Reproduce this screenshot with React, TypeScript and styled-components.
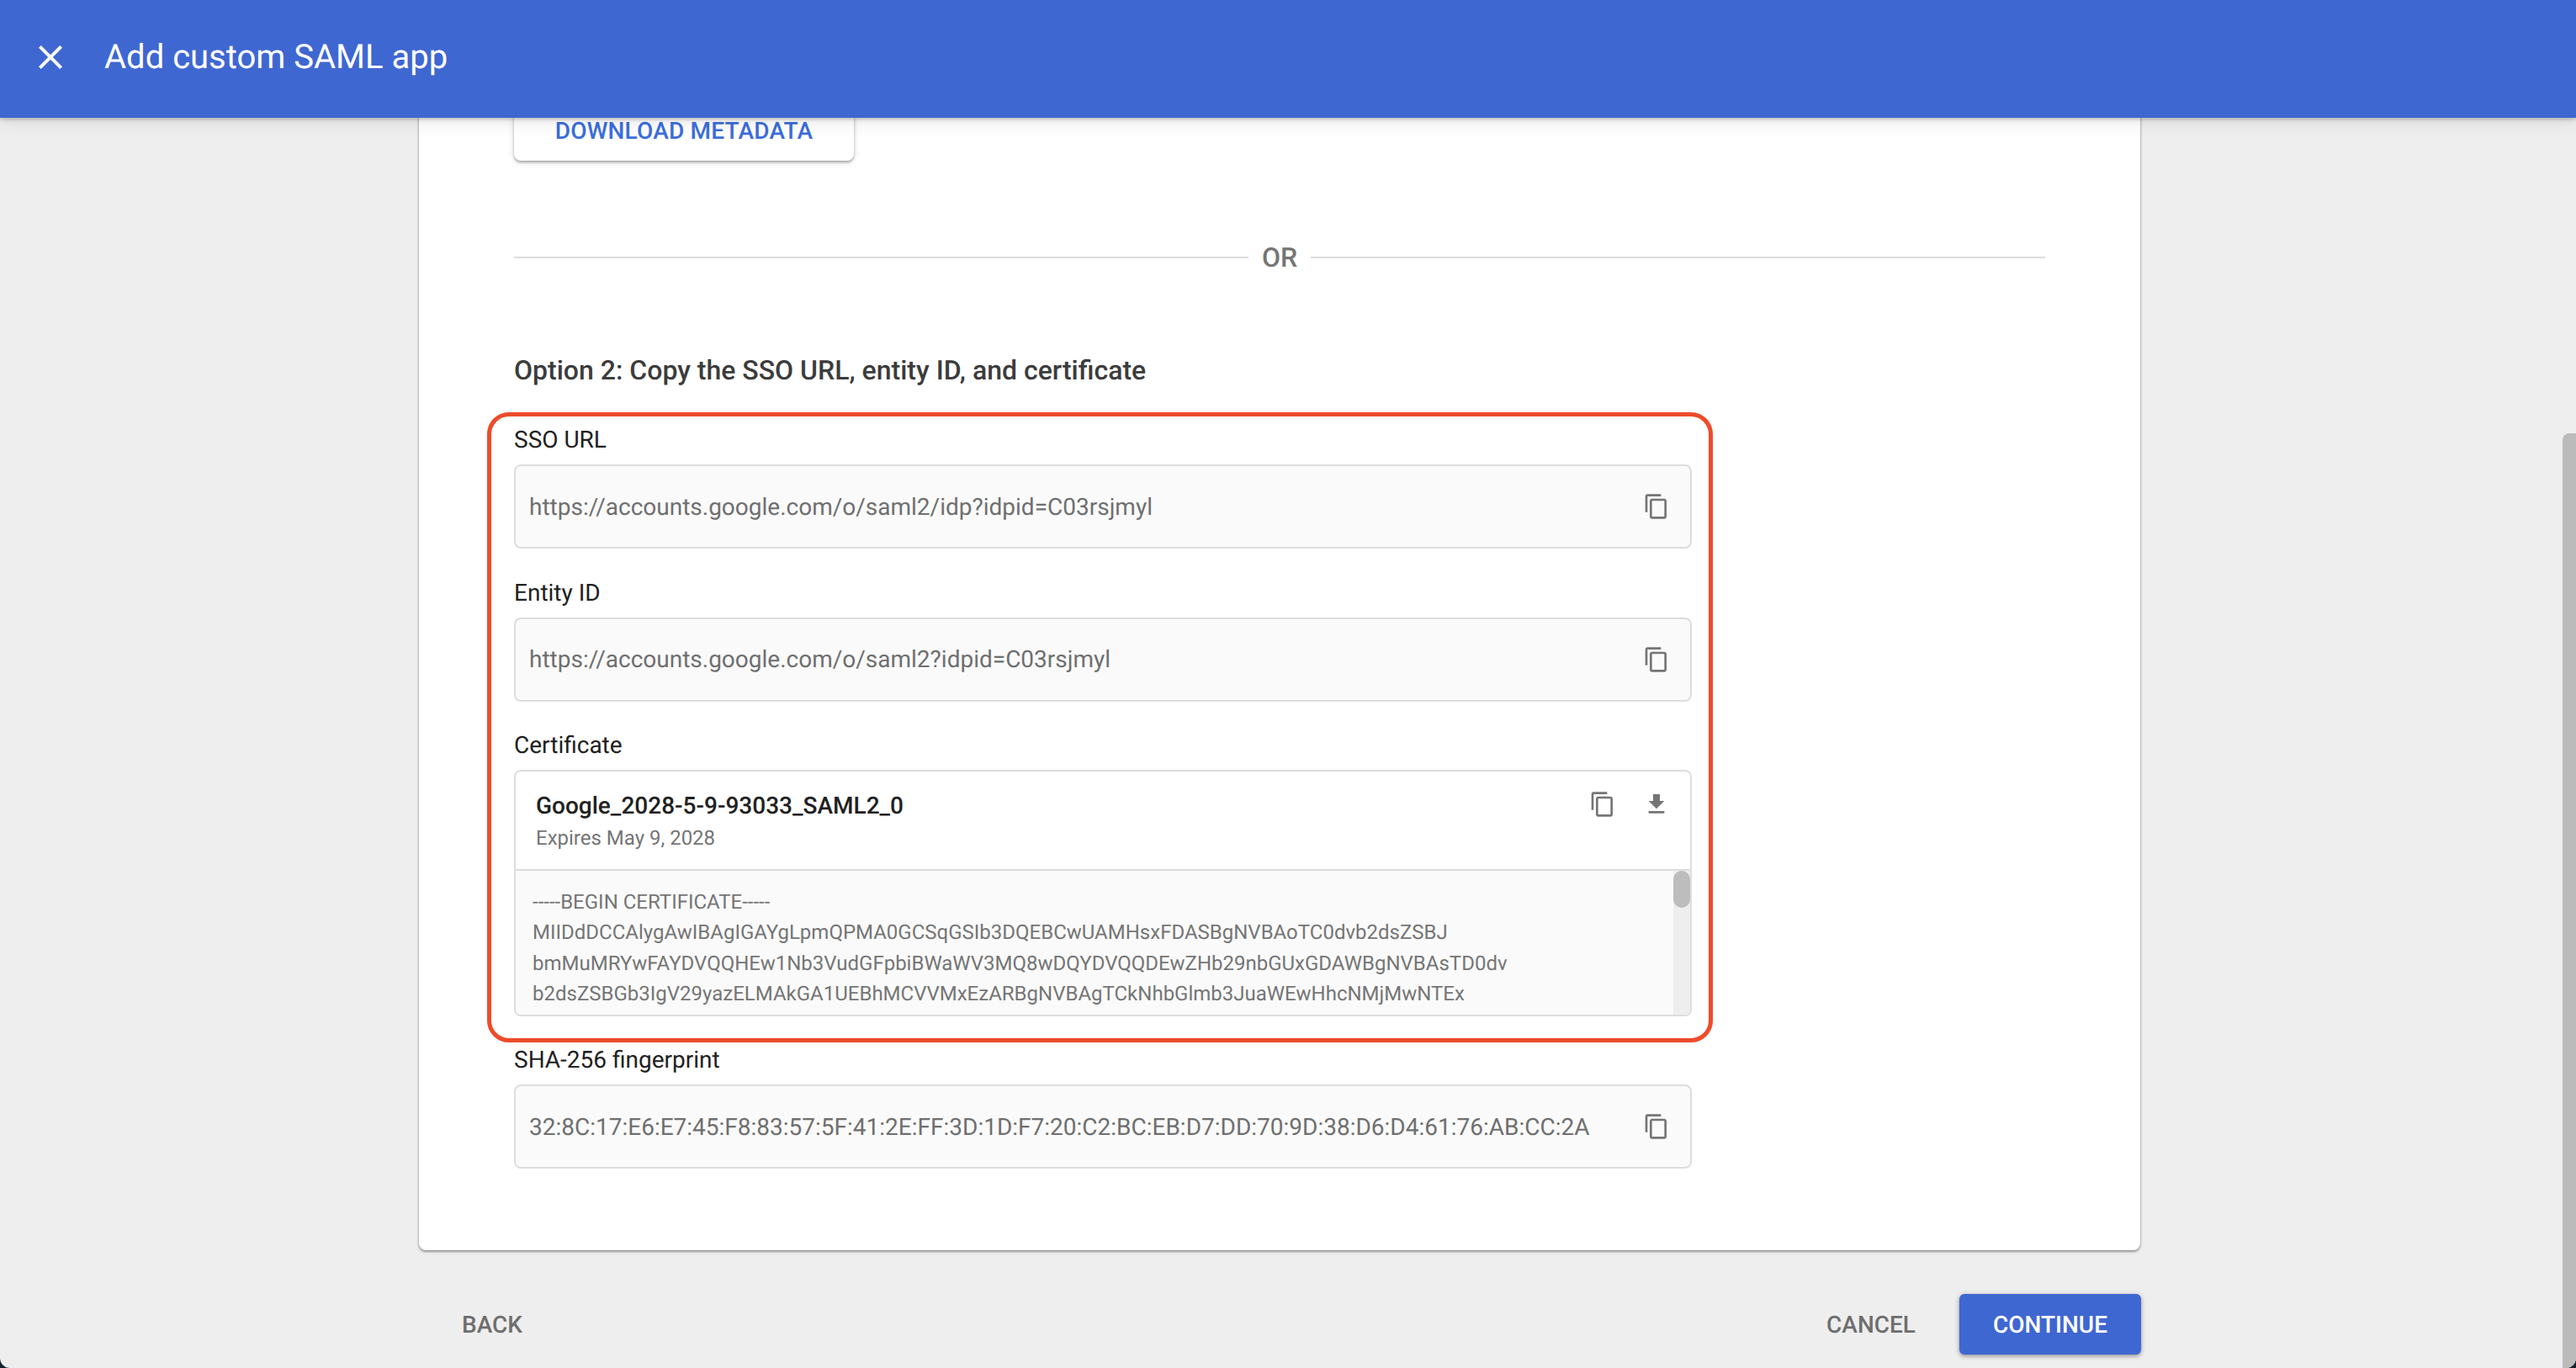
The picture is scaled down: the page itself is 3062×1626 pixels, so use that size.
import { MdClose, MdContentCopy, MdFileDownload } from "react-icons/md";
import styled, { createGlobalStyle } from "styled-components";

const GlobalStyle = createGlobalStyle`
  html, body {
    margin: 0;
    padding: 0;
    background: #14242c;
    font-family: Roboto, "Liberation Sans", sans-serif;
    text-rendering: geometricPrecision;
  }
`;

const CERT_LINES = [
  "-----BEGIN CERTIFICATE-----",
  "MIIDdDCCAlygAwIBAgIGAYgLpmQPMA0GCSqGSIb3DQEBCwUAMHsxFDASBgNVBAoTC0dvb2dsZSBJ",
  "bmMuMRYwFAYDVQQHEw1Nb3VudGFpbiBWaWV3MQ8wDQYDVQQDEwZHb29nbGUxGDAWBgNVBAsTD0dv",
  "b2dsZSBGb3IgV29yazELMAkGA1UEBhMCVVMxEzARBgNVBAgTCkNhbGlmb3JuaWEwHhcNMjMwNTEx",
];

function CopyField({ value }: { value: string }) {
  return (
    <Field>
      <FieldValue>{value}</FieldValue>
      <IconButton>
        <MdContentCopy />
      </IconButton>
    </Field>
  );
}

export default function App() {
  return (
    <Page>
      <GlobalStyle />
      <Header>
        <CloseButton>
          <MdClose />
        </CloseButton>
        <Title>Add custom SAML app</Title>
      </Header>
      <Body>
        <Main>
          <Card>
            <DownloadButton>Download metadata</DownloadButton>
            <OrRow>
              <OrLine />
              <OrText>OR</OrText>
              <OrLine />
            </OrRow>
            <Heading>Option 2: Copy the SSO URL, entity ID, and certificate</Heading>
            <Highlighted>
              <Highlight />
              <Label>SSO URL</Label>
              <CopyField value="https://accounts.google.com/o/saml2/idp?idpid=C03rsjmyl" />
              <Label $spaced>Entity ID</Label>
              <CopyField value="https://accounts.google.com/o/saml2?idpid=C03rsjmyl" />
              <Label $spaced>Certificate</Label>
              <CertBox>
                <CertHead>
                  <div>
                    <CertName>Google_2028-5-9-93033_SAML2_0</CertName>
                    <CertExpiry>Expires May 9, 2028</CertExpiry>
                  </div>
                  <CertActions>
                    <MdContentCopy />
                    <MdFileDownload />
                  </CertActions>
                </CertHead>
                <CertBody>
                  <CertText>
                    {CERT_LINES.map((line) => (
                      <div key={line}>{line}</div>
                    ))}
                  </CertText>
                  <CertScroll>
                    <CertThumb />
                  </CertScroll>
                </CertBody>
              </CertBox>
            </Highlighted>
            <Label $fingerprint>SHA-256 fingerprint</Label>
            <CopyField value="32:8C:17:E6:E7:45:F8:83:57:5F:41:2E:FF:3D:1D:F7:20:C2:BC:EB:D7:DD:70:9D:38:D6:D4:61:76:AB:CC:2A" />
          </Card>
          <Footer>
            <TextButton>Back</TextButton>
            <FooterRight>
              <TextButton>Cancel</TextButton>
              <ContinueButton>Continue</ContinueButton>
            </FooterRight>
          </Footer>
        </Main>
        <PageScroll>
          <PageThumb />
        </PageScroll>
      </Body>
    </Page>
  );
}

const Page = styled.div`
  width: 3062px;
  height: 1626px;
  overflow: hidden;
  display: flex;
  flex-direction: column;
  background: #eeeeee;
  border-radius: 0 0 12px 12px;
`;

const Header = styled.header`
  flex: none;
  height: 140px;
  box-sizing: border-box;
  padding: 0 0 4px 36px;
  display: flex;
  align-items: center;
  gap: 40px;
  background: #3f67d1;
  color: #ffffff;
  position: relative;
  z-index: 2;
  box-shadow: 0 2px 4px rgba(0, 0, 0, 0.22), 0 4px 20px rgba(0, 0, 0, 0.1);
`;

const CloseButton = styled.div`
  display: flex;
  font-size: 48px;
`;

const Title = styled.h1`
  margin: 0;
  font-size: 40px;
  font-weight: 400;
  line-height: 56px;
`;

const Body = styled.div`
  flex: 1;
  min-height: 0;
  display: flex;
`;

const Main = styled.main`
  flex: 1;
  min-width: 0;
  padding-left: 498px;
`;

const Card = styled.section`
  width: 2046px;
  box-sizing: border-box;
  margin-top: -40px;
  padding: 19px 113px 97px 113px;
  background: #ffffff;
  border-radius: 8px;
  box-shadow: 0 2px 3px rgba(0, 0, 0, 0.35), 0 0 3px rgba(0, 0, 0, 0.2);
`;

const DownloadButton = styled.div`
  width: 404px;
  height: 72px;
  display: flex;
  align-items: center;
  justify-content: center;
  border-radius: 8px;
  background: #ffffff;
  color: #3b6edb;
  font-size: 28px;
  font-weight: 500;
  letter-spacing: 0.2px;
  text-transform: uppercase;
  box-shadow: 0 2px 3px rgba(0, 0, 0, 0.3), 0 2px 8px rgba(0, 0, 0, 0.12);
`;

const OrRow = styled.div`
  margin-top: 95px;
  height: 40px;
  display: flex;
  align-items: center;
`;

const OrLine = styled.div`
  flex: 1;
  height: 2px;
  background: #dddddd;
`;

const OrText = styled.span`
  width: 74px;
  text-align: center;
  font-size: 32px;
  font-weight: 500;
  color: #757575;
`;

const Heading = styled.h2`
  margin: 94px 0 0;
  font-size: 32px;
  font-weight: 500;
  line-height: 40px;
  color: #3c3c3c;
`;

const Highlighted = styled.div`
  position: relative;
  width: 1400px;
  margin-top: 47px;
`;

const Highlight = styled.div`
  position: absolute;
  top: -17px;
  right: -25px;
  bottom: -31px;
  left: -32px;
  border: 5px solid #ee4b2b;
  border-radius: 26px;
  pointer-events: none;
`;

const Label = styled.div<{ $spaced?: boolean; $fingerprint?: boolean }>`
  height: 32px;
  margin-top: ${(p) => (p.$fingerprint ? "36px" : p.$spaced ? "36.5px" : "0")};
  margin-bottom: 13px;
  font-size: 28px;
  line-height: 32px;
  color: #212121;
`;

const Field = styled.div`
  width: 1400px;
  height: 100px;
  box-sizing: border-box;
  padding: 0 24px 0 16px;
  display: flex;
  align-items: center;
  justify-content: space-between;
  background: #fafafa;
  border: 2px solid #dddddd;
  border-radius: 8px;
`;

const FieldValue = styled.span`
  font-size: 28px;
  color: #6f6f6f;
`;

const IconButton = styled.div`
  display: flex;
  font-size: 32px;
  color: #757575;
`;

const CertBox = styled.div`
  width: 1400px;
  height: 293px;
  box-sizing: border-box;
  display: flex;
  flex-direction: column;
  overflow: hidden;
  background: #ffffff;
  border: 2px solid #dddddd;
  border-radius: 8px;
`;

const CertHead = styled.div`
  flex: none;
  height: 118px;
  box-sizing: border-box;
  padding: 23px 24px 0 24px;
  display: flex;
  justify-content: space-between;
  border-bottom: 2px solid #dddddd;
`;

const CertName = styled.div`
  font-size: 28px;
  font-weight: 500;
  line-height: 36px;
  color: #212121;
`;

const CertExpiry = styled.div`
  margin-top: 4px;
  font-size: 24px;
  line-height: 32px;
  color: #757575;
`;

const CertActions = styled.div`
  display: flex;
  gap: 32px;
  font-size: 32px;
  color: #757575;
`;

const CertBody = styled.div`
  flex: 1;
  min-height: 0;
  display: flex;
  background: #fafafa;
`;

const CertText = styled.div`
  flex: 1;
  min-width: 0;
  padding: 19px 0 0 20px;
  font-size: 24px;
  line-height: 36.4px;
  color: #757575;
  white-space: nowrap;
`;

const CertScroll = styled.div`
  flex: none;
  width: 20px;
  background: #eeeeee;
`;

const CertThumb = styled.div`
  height: 44px;
  border-radius: 10px;
  background: #bdbdbd;
`;

const Footer = styled.div`
  width: 2047px;
  margin-top: 52px;
  box-sizing: border-box;
  padding-left: 51px;
  display: flex;
  align-items: center;
  justify-content: space-between;
`;

const FooterRight = styled.div`
  display: flex;
  align-items: center;
  gap: 52px;
`;

const TextButton = styled.div`
  font-size: 28px;
  font-weight: 500;
  color: #6e6e6e;
  text-transform: uppercase;
`;

const ContinueButton = styled.div`
  width: 216px;
  height: 72px;
  display: flex;
  align-items: center;
  justify-content: center;
  border-radius: 6px;
  background: #3f67d1;
  color: #ffffff;
  font-size: 28px;
  font-weight: 500;
  text-transform: uppercase;
  box-shadow: 0 2px 4px rgba(0, 0, 0, 0.3), 0 1px 8px rgba(0, 0, 0, 0.12);
`;

const PageScroll = styled.div`
  flex: none;
  width: 16px;
  padding-top: 375px;
  box-sizing: border-box;
`;

const PageThumb = styled.div`
  height: 100%;
  border-radius: 8px 0 0 0;
  background: #bbbbbb;
`;
